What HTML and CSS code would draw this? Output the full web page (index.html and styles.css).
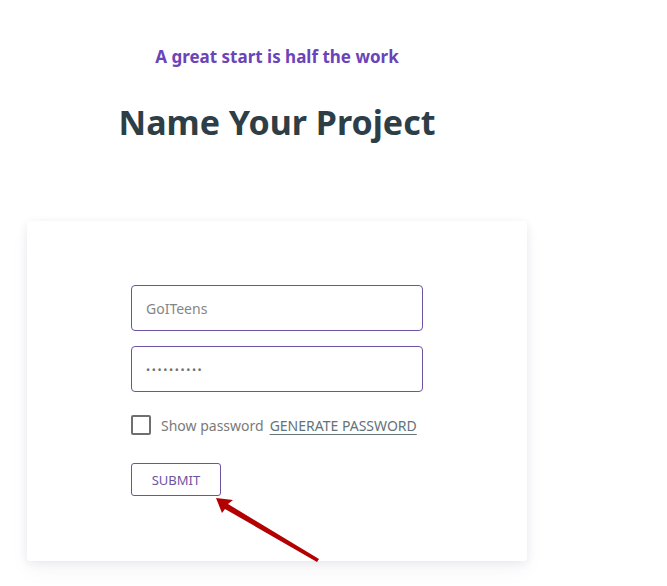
FILE: index.html
```html
<!DOCTYPE html>
<html lang="en">
<head>
<meta charset="utf-8">
<title>Name Your Project</title>
<link rel="stylesheet" href="styles.css">
</head>
<body>
<div class="page">
  <header class="intro">
    <p class="subtitle">A great start is half the work</p>
    <h1 class="title">Name Your Project</h1>
  </header>
  <section class="card">
    <form class="form">
      <input class="field" type="text" placeholder="GoITeens">
      <input class="field field-pass" type="password" value="1234567890">
      <div class="options">
        <label class="check"><span class="box"></span><span class="check-text">Show password</span></label>
        <a class="generate" href="#">GENERATE PASSWORD</a>
      </div>
      <button class="submit" type="button">SUBMIT</button>
    </form>
  </section>
</div>
<svg class="arrow" width="130" height="80" viewBox="200 490 130 80">
  <polygon fill="#b30000" points="216,498 233,500 228,504 319,559 317,562 225,509 222,513"/>
</svg>
</body>
</html>
```
FILE: styles.css
```css
* { box-sizing: border-box; }
html, body { margin: 0; padding: 0; background: #fff; }
body {
  font-family: "Noto Sans", "Open Sans", sans-serif;
  position: relative;
  height: 586px;
  overflow: hidden;
}
.page {
  width: 500px;
  margin-left: 27px;
  padding-top: 44px;
}
.intro { text-align: center; }
.subtitle {
  margin: 0;
  font-size: 17px;
  line-height: 26px;
  font-weight: 700;
  color: #6a44b8;
}
.title {
  margin: 29px 0 0;
  font-size: 34px;
  line-height: 46px;
  font-weight: 700;
  color: #2e3e46;
}
.card {
  margin-top: 76px;
  height: 340px;
  background: #fff;
  border-radius: 3px;
  box-shadow: 0 2px 10px rgba(40, 40, 90, 0.08), 0 10px 20px rgba(40, 40, 90, 0.04);
  padding: 64px 0 0 104px;
}
.form {
  width: 292px;
  display: flex;
  flex-direction: column;
  align-items: flex-start;
}
.field {
  width: 292px;
  height: 46px;
  border: 1px solid #6d53a0;
  border-radius: 4px;
  padding: 0 14px;
  font-family: inherit;
  font-size: 14px;
  color: #757575;
  outline: none;
  background: #fff;
}
.field::placeholder { color: #858585; }
.field + .field { margin-top: 15px; }
.field-pass { font-size: 11px; letter-spacing: 1.6px; color: #707070; }
.options {
  margin-top: 22px;
  display: flex;
  align-items: center;
  height: 22px;
}
.check { display: flex; align-items: center; cursor: pointer; }
.box {
  width: 20px;
  height: 20px;
  border: 2px solid #6f6f6f;
  border-radius: 2px;
}
.check-text {
  margin-left: 10px;
  font-size: 14px;
  color: #7a7a7a;
}
.generate {
  margin-left: 6px;
  font-size: 14px;
  font-weight: 400;
  color: #627379;
  text-decoration: underline;
  text-underline-offset: 3px;
}
.submit {
  margin-top: 27px;
  width: 90px;
  height: 33px;
  border: 1px solid #6d53a0;
  border-radius: 3px;
  background: #fff;
  font-family: inherit;
  font-size: 13px;
  color: #6d53a0;
  padding: 0;
}
.arrow {
  position: absolute;
  left: 200px;
  top: 490px;
}
```
